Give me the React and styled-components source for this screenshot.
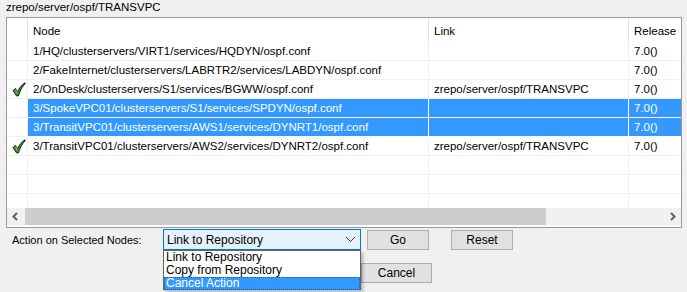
import React from 'react';
import styled, { createGlobalStyle } from 'styled-components';

const GlobalStyle = createGlobalStyle`
  html, body {
    margin: 0;
    padding: 0;
    background: #f0f0f0;
  }
  body {
    font-family: "Liberation Sans", Arial, sans-serif;
    font-size: 12px;
    color: #000;
  }
`;

const Window = styled.div`
  width: 687px;
  height: 292px;
  position: relative;
  overflow: hidden;
  background: #f0f0f0;
`;

const Title = styled.div`
  height: 17px;
  line-height: 15px;
  padding-left: 6px;
  font-size: 11.5px;
`;

const ListBox = styled.div`
  margin-left: 6px;
  width: 674px;
  height: 209px;
  border: 1px solid #9a9a9a;
  background: #fff;
  display: flex;
  flex-direction: column;
  overflow: hidden;
  font-size: 11.5px;
`;

const HeaderRow = styled.div`
  display: flex;
  height: 24px;
  flex: none;
`;

const HeaderCell = styled.div`
  width: ${(p) => p.$w}px;
  flex: none;
  box-sizing: border-box;
  padding-left: 5px;
  line-height: 26px;
  border-right: 1px solid ${(p) => (p.$last ? 'transparent' : '#e5e5e5')};
  white-space: nowrap;
`;

const Body = styled.div`
  height: 166px;
  flex: none;
  overflow: hidden;
`;

const Row = styled.div`
  display: flex;
  height: 19px;
`;

const Cell = styled.div`
  width: ${(p) => p.$w}px;
  flex: none;
  box-sizing: border-box;
  padding-left: 5px;
  line-height: 18px;
  white-space: nowrap;
  overflow: hidden;
  border-right: 1px solid ${(p) => (p.$last ? 'transparent' : '#f0f0f0')};
  border-bottom: 1px solid #f0f0f0;
  background: ${(p) => (p.$sel ? '#3399ff' : '#fff')};
  color: ${(p) => (p.$sel ? '#fff' : '#000')};
  ${(p) => p.$sel && 'border-right-color: #fff; border-bottom-color: #fff;'}
`;

const CheckCell = styled.div`
  width: 21px;
  flex: none;
  box-sizing: border-box;
  border-right: 1px solid #f0f0f0;
  border-bottom: 1px solid #f0f0f0;
  display: flex;
  align-items: center;
  justify-content: flex-end;
  padding-right: 1px;
`;

const ScrollBar = styled.div`
  height: 17px;
  flex: none;
  display: flex;
  align-items: center;
  background: #f0f0f0;
`;

const ScrollArrow = styled.div`
  width: 17px;
  height: 17px;
  flex: none;
  display: flex;
  align-items: center;
  justify-content: center;
`;

const Thumb = styled.div`
  width: 521px;
  height: 17px;
  background: #cdcdcd;
  flex: none;
  margin-left: 1px;
`;

const Track = styled.div`
  flex: 1;
`;

const Controls = styled.div`
  position: relative;
  padding-top: 1px;
`;

const ActionRow = styled.div`
  display: flex;
  align-items: center;
  height: 21px;
`;

const Label = styled.div`
  width: 151px;
  padding-left: 12px;
  flex: none;
  line-height: 21px;
  margin-top: 2px;
  font-size: 11px;
`;

const Combo = styled.div`
  width: 198px;
  height: 21px;
  box-sizing: border-box;
  border: 1px solid #0078d7;
  background: #e5f1fb;
  display: flex;
  align-items: center;
  justify-content: space-between;
  padding: 0 4px 0 3px;
  flex: none;
`;

const Button = styled.div`
  width: ${(p) => p.$w}px;
  height: 20px;
  box-sizing: border-box;
  border: 1px solid #adadad;
  background: #e1e1e1;
  display: flex;
  align-items: center;
  justify-content: center;
  flex: none;
  margin-left: ${(p) => p.$ml || 0}px;
`;

const SecondRow = styled.div`
  display: flex;
  padding-left: 361px;
  margin-top: 13px;
`;

const DropList = styled.div`
  position: absolute;
  left: 163px;
  top: 22px;
  width: 198px;
  height: 40px;
  box-sizing: border-box;
  border: 1px solid #646464;
  background: #fff;
  box-shadow: 2px 2px 3px rgba(0, 0, 0, 0.25);
  z-index: 2;
`;

const DropItem = styled.div`
  height: 13px;
  line-height: 13px;
  padding-left: 2px;
  box-sizing: border-box;
  background: ${(p) => (p.$sel ? '#3399ff' : 'transparent')};
  color: ${(p) => (p.$sel ? '#fff' : '#000')};
  ${(p) => p.$sel && 'outline: 1px dotted #1f5ea0; outline-offset: -1px;'}
`;

const Check = () => (
  <svg width="14" height="15" viewBox="0 0 14 15">
    <path
      d="M1 8.5 L3.5 6.5 L5.5 10 C7.5 5.5 10 2.5 13 0.8 L13.3 1.6 C10.5 4 8.2 8.5 6.3 14 L4.6 14 Z"
      fill="#3d8c2f"
      stroke="#142b0e"
      strokeWidth="1"
      strokeLinejoin="round"
    />
    <path d="M3.6 8 L5.4 11.2" stroke="#b6e2a8" strokeWidth="0.8" fill="none" />
  </svg>
);

const Chevron = ({ dir }) => (
  <svg width="9" height="9" viewBox="0 0 9 9">
    <path
      d={dir === 'left' ? 'M6 1 L2.5 4.5 L6 8' : 'M3 1 L6.5 4.5 L3 8'}
      stroke="#606060"
      strokeWidth="2"
      fill="none"
    />
  </svg>
);

const Down = () => (
  <svg width="11" height="7" viewBox="0 0 11 7">
    <path d="M1 1 L5.5 5.5 L10 1" stroke="#333" strokeWidth="1" fill="none" />
  </svg>
);

const cols = [401, 200, 80];

const rows = [
  { node: '1/HQ/clusterservers/VIRT1/services/HQDYN/ospf.conf', link: '', rel: '7.0()' },
  { node: '2/FakeInternet/clusterservers/LABRTR2/services/LABDYN/ospf.conf', link: '', rel: '7.0()' },
  { node: '2/OnDesk/clusterservers/S1/services/BGWW/ospf.conf', link: 'zrepo/server/ospf/TRANSVPC', rel: '7.0()', check: true },
  { node: '3/SpokeVPC01/clusterservers/S1/services/SPDYN/ospf.conf', link: '', rel: '7.0()', sel: true },
  { node: '3/TransitVPC01/clusterservers/AWS1/services/DYNRT1/ospf.conf', link: '', rel: '7.0()', sel: true },
  { node: '3/TransitVPC01/clusterservers/AWS2/services/DYNRT2/ospf.conf', link: 'zrepo/server/ospf/TRANSVPC', rel: '7.0()', check: true },
  { node: '', link: '', rel: '' },
  { node: '', link: '', rel: '' },
  { node: '', link: '', rel: '' },
];

const App = () => {
  return (
    <Window>
      <GlobalStyle />
      <Title>zrepo/server/ospf/TRANSVPC</Title>
      <ListBox>
        <HeaderRow>
          <HeaderCell $w={21} />
          <HeaderCell $w={cols[0]}>Node</HeaderCell>
          <HeaderCell $w={cols[1]}>Link</HeaderCell>
          <HeaderCell $w={cols[2]} $last>Release</HeaderCell>
        </HeaderRow>
        <Body>
          {rows.map((r, i) => (
            <Row key={i}>
              <CheckCell>{r.check && <Check />}</CheckCell>
              <Cell $w={cols[0]} $sel={r.sel}>{r.node}</Cell>
              <Cell $w={cols[1]} $sel={r.sel}>{r.link}</Cell>
              <Cell $w={cols[2]} $sel={r.sel} $last>{r.rel}</Cell>
            </Row>
          ))}
        </Body>
        <ScrollBar>
          <ScrollArrow><Chevron dir="left" /></ScrollArrow>
          <Thumb />
          <Track />
          <ScrollArrow><Chevron dir="right" /></ScrollArrow>
        </ScrollBar>
      </ListBox>
      <Controls>
        <ActionRow>
          <Label>Action on Selected Nodes:</Label>
          <Combo>
            <span>Link to Repository</span>
            <Down />
          </Combo>
          <Button $w={62} $ml={6}>Go</Button>
          <Button $w={62} $ml={22}>Reset</Button>
        </ActionRow>
        <SecondRow>
          <Button $w={71}>Cancel</Button>
        </SecondRow>
        <DropList>
          <DropItem>Link to Repository</DropItem>
          <DropItem>Copy from Repository</DropItem>
          <DropItem $sel>Cancel Action</DropItem>
        </DropList>
      </Controls>
    </Window>
  );
};

export default App;
